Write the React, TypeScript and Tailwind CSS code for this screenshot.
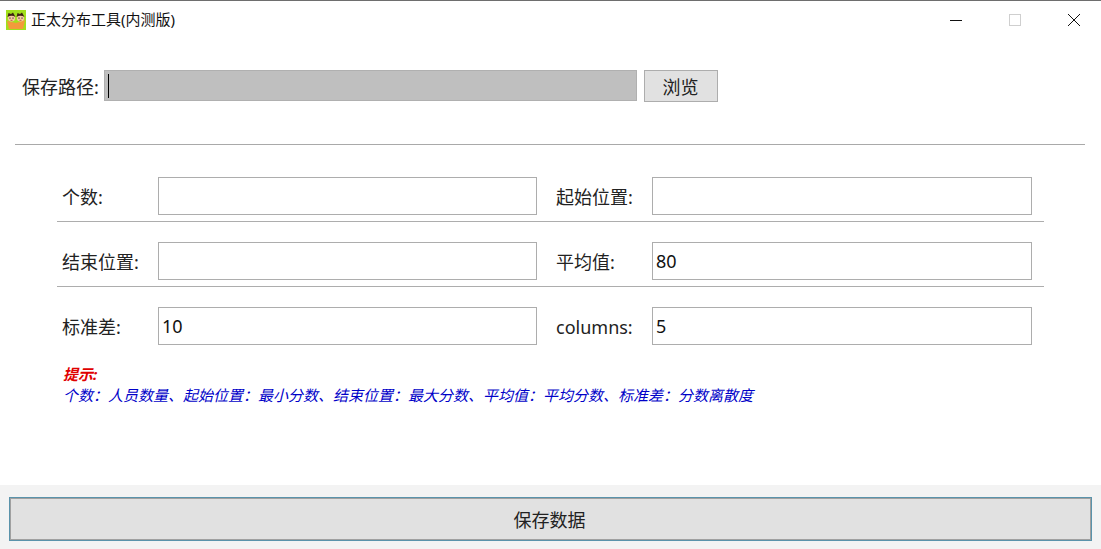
const FONT = "font-['Noto_Sans','Noto_Sans_CJK_SC',sans-serif]";

function AppIcon() {
  return (
    <svg width="20" height="20" viewBox="0 0 20 20" className="shrink-0">
      <rect width="20" height="20" fill="#a2e01c" />
      <path d="M1 11 L10 13 L19 10 L17 19 L3 19 Z" fill="#f39a3c" />
      <circle cx="5.5" cy="8" r="3.6" fill="#f6c9a0" />
      <circle cx="14.5" cy="8" r="3.6" fill="#f6c9a0" />
      <path d="M1.5 7 L2.5 3 L5 4 L7 2.5 L9.5 7 Q5.5 4.5 1.5 7 Z" fill="#3f2410" />
      <path d="M10.5 7 L11.5 3 L14 4 L16 2.5 L18.5 7 Q14.5 4.5 10.5 7 Z" fill="#3f2410" />
      <rect x="3.5" y="7.5" width="1" height="1.2" fill="#222" />
      <rect x="6.5" y="7.5" width="1" height="1.2" fill="#222" />
      <rect x="12.5" y="7.5" width="1" height="1.2" fill="#222" />
      <rect x="15.5" y="7.5" width="1" height="1.2" fill="#222" />
      <path d="M4.5 10.3 H6.5 M13.5 10.3 H15.5" stroke="#c0392b" strokeWidth="0.8" />
    </svg>
  );
}

function TitleBar() {
  return (
    <div className="flex h-[38px] items-center border-t border-t-[#6e6e6e] pl-[6px]">
      <AppIcon />
      <span className="ml-[5px] text-[15px] leading-none text-[#111]">正太分布工具(内测版)</span>
      <div className="ml-auto flex items-center pr-[20px]">
        <svg width="12" height="12" viewBox="0 0 12 12" className="mr-[47px]">
          <path d="M0 6.5 H12" stroke="#111" strokeWidth="1" />
        </svg>
        <svg width="12" height="12" viewBox="0 0 12 12" className="mr-[46px]">
          <rect x="0.5" y="0.5" width="11" height="11" fill="none" stroke="#cfcfcf" />
        </svg>
        <svg width="14" height="14" viewBox="0 0 14 14">
          <path d="M1 1 L13 13 M13 1 L1 13" stroke="#111" strokeWidth="1" />
        </svg>
      </div>
    </div>
  );
}

function Field({ label, value, labelClass, inputWidth }: { label: string; value?: string; labelClass: string; inputWidth: string }) {
  return (
    <div className="flex items-center">
      <span className={`${labelClass} whitespace-nowrap pt-[2px] text-[18px] leading-none text-[#222]`}>{label}</span>
      <div className={`${inputWidth} flex h-[38px] items-center border border-[#adadad] bg-white pl-[3px] text-[18px] text-[#111]`}>
        {value}
      </div>
    </div>
  );
}

function FormRow({ children, divider }: { children: React.ReactNode; divider?: boolean }) {
  return (
    <div className={`flex w-[987px] items-start pb-[6px] ${divider ? "border-b border-b-[#adadad]" : ""}`}>
      {children}
    </div>
  );
}

const LEFT_LABEL = "w-[101px] pl-[5px]";
const RIGHT_LABEL = "w-[102px] pl-[6px]";

export default function App() {
  return (
    <div className={`${FONT} flex h-[549px] w-[1101px] flex-col overflow-hidden bg-white`}>
      <TitleBar />

      <div className="flex items-start pl-[22px] pt-[32px]">
        <span className="flex h-[31px] w-[82px] items-center whitespace-nowrap pt-[2px] text-[18px] leading-none text-[#222]">保存路径:</span>
        <div className="flex h-[31px] w-[533px] items-center border border-[#b0b0b0] bg-[#bfbfbf] pl-[3px]">
          <div className="h-[24px] w-px bg-black" />
        </div>
        <button className="ml-[7px] h-[32px] w-[74px] border border-[#adadad] bg-[#e1e1e1] pr-[1px] pt-[2px] text-[18px] leading-none text-[#222]">
          浏览
        </button>
      </div>

      <div className="mx-[15px] mt-[42px] h-px w-[1070px] bg-[#a9a9a9]" />

      <div className="ml-[57px] mt-[32px] flex flex-col gap-[20px]">
        <FormRow divider>
          <Field label="个数:" labelClass={LEFT_LABEL} inputWidth="w-[379px]" />
          <div className="w-[13px]" />
          <Field label="起始位置:" labelClass={RIGHT_LABEL} inputWidth="w-[380px]" />
        </FormRow>
        <FormRow divider>
          <Field label="结束位置:" labelClass={LEFT_LABEL} inputWidth="w-[379px]" />
          <div className="w-[13px]" />
          <Field label="平均值:" value="80" labelClass={RIGHT_LABEL} inputWidth="w-[380px]" />
        </FormRow>
        <FormRow>
          <Field label="标准差:" value="10" labelClass={LEFT_LABEL} inputWidth="w-[379px]" />
          <div className="w-[13px]" />
          <Field label="columns:" value="5" labelClass={RIGHT_LABEL} inputWidth="w-[380px]" />
        </FormRow>
      </div>

      <div className="ml-[63px] mt-[13px] flex flex-col text-[15px] italic leading-[21px]">
        <span className="font-bold text-[#e00000]">提示:</span>
        <span className="whitespace-nowrap text-[#0000c8]">{"个数\uFF1A人员数量、起始位置\uFF1A最小分数、结束位置\uFF1A最大分数、平均值\uFF1A平均分数、标准差\uFF1A分数离散度"}</span>
      </div>

      <div className="mt-auto flex h-[64px] items-start bg-[#f3f3f3] pl-[9px] pt-[12px]">
        <button className="h-[44px] w-[1083px] border border-[#5a93ab] bg-[#e1e1e1] pr-[2px] pt-[2px] text-[18px] leading-none text-[#222] shadow-[inset_0_0_0_1px_#a0a0a0]">
          保存数据
        </button>
      </div>
    </div>
  );
}
